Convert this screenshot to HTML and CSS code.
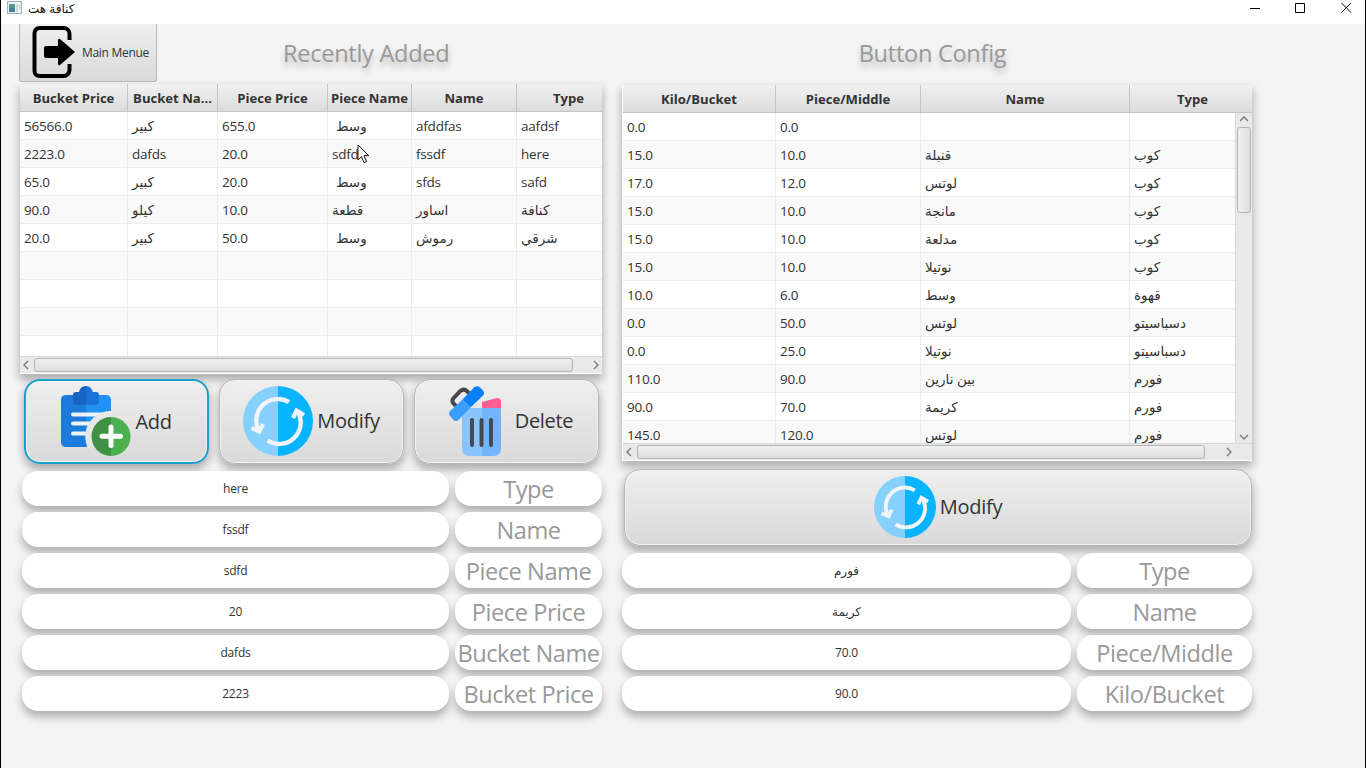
FILE: index.html
```html
<!DOCTYPE html>
<html lang="en">
<head>
<meta charset="utf-8">
<title>كنافة هت</title>
<link rel="stylesheet" href="styles.css">
</head>
<body>
<svg class="defs" width="0" height="0">
  <symbol id="refresh" viewBox="0 0 70 70">
    <path d="M35 0a35 35 0 0 0 0 70z" fill="#86d0fd"/>
    <path d="M35 0a35 35 0 0 1 0 70z" fill="#08b4fd"/>
    <path d="M46 16.200A21.500 21.500 0 0 0 15.500 44" fill="none" stroke="#f1f4f6" stroke-width="4.400"/>
    <path d="M24.500 54.500A21.500 21.500 0 0 0 55.500 27" fill="none" stroke="#f1f4f6" stroke-width="4.400"/>
    <path d="M8.500 42l8 3.500 3.500-7.500M50 32l3.500-7.500 7.500 4.500" fill="none" stroke="#f1f4f6" stroke-width="4.200"/>
  </symbol>
</svg>
<div class="window">
  <header class="titlebar">
    <svg class="appicon" viewBox="0 0 15 13"><rect x=".5" y=".5" width="14" height="12" fill="#eef3f4" stroke="#a5adb0"/><path d="M2 3h6v8H2z" fill="#4f9c8e"/><path d="M2 7h6v4H2z" fill="#43809c"/><path d="M9 3h2v8H9zM12 3h1.500v5H12z" fill="#cbd8df"/></svg>
    <span class="apptitle" dir="rtl">كنافة هت</span>
    <svg class="winbtns" width="102" height="12" viewBox="0 0 102 12" fill="none" stroke="#000"><path d="M0 7.500h10M45.500 2.500h9v9h-9zM91.500 2l9.500 9.500M101 2l-9.500 9.500"/></svg>
  </header>
  <main class="columns">
    <section class="left">
      <div class="top">
        <button class="btn menu">
          <svg width="43" height="52" viewBox="0 0 43 52"><path d="M37.500 14V8a6 6 0 0 0-6-6h-24a5 5 0 0 0-5 5v38a5 5 0 0 0 5 5h24a6 6 0 0 0 6-6v-6" fill="none" stroke="#000" stroke-width="4"/><path d="M14 20h12v-6q0-2 2-1l15 13-15 13q-2 1-2-1v-6H14q-2 0-2-2v-8q0-2 2-2z"/></svg>
          <span>Main Menue</span>
        </button>
        <h1>Recently Added</h1>
      </div>
      <div class="table recent">
        <div class="row head"><b>Bucket Price</b><b>Bucket Na...</b><b>Piece Price</b><b>Piece Name</b><b>Name</b><b class="last">Type</b></div>
        <div class="body">
          <div class="row"><i>56566.0</i><i>كبير</i><i>655.0</i><i class="in">وسط</i><i>afddfas</i><i>aafdsf</i></div>
          <div class="row"><i>2223.0</i><i>dafds</i><i>20.0</i><i>sdfd</i><i>fssdf</i><i>here</i></div>
          <div class="row"><i>65.0</i><i>كبير</i><i>20.0</i><i class="in">وسط</i><i>sfds</i><i>safd</i></div>
          <div class="row"><i>90.0</i><i>كيلو</i><i>10.0</i><i>قطعة</i><i>اساور</i><i>كنافة</i></div>
          <div class="row"><i>20.0</i><i>كبير</i><i>50.0</i><i class="in">وسط</i><i>رموش</i><i>شرقي</i></div>
          <div class="row"><i></i><i></i><i></i><i></i><i></i><i></i></div>
          <div class="row"><i></i><i></i><i></i><i></i><i></i><i></i></div>
          <div class="row"><i></i><i></i><i></i><i></i><i></i><i></i></div>
          <div class="row"><i></i><i></i><i></i><i></i><i></i><i></i></div>
        </div>
        <div class="hscroll"><svg viewBox="0 0 6 10"><path d="M5 1L1 5l4 4"/></svg><span class="thumb"></span><svg viewBox="0 0 6 10"><path d="M1 1l4 4-4 4"/></svg></div>
      </div>
      <div class="actions">
        <button class="btn round focus">
          <svg width="70" height="70" viewBox="0 0 70 70"><path d="M5 9h20v52H5q-5 0-5-5V14q0-5 5-5z" fill="#1b7bdc"/><path d="M25 9h20q5 0 5 5v12L26 46v15h-1z" fill="#2391f3"/><path d="M12 28.500h29M12 37.500h21M12 47.500h17" stroke="#eef2f7" stroke-width="4" stroke-linecap="round"/><path d="M25 0q-6 0-7 6h-3q-3 0-3 3v6q0 4 4 4h9z" fill="#1763c0"/><path d="M25 0q5 0 7 6h3q3 0 3 3v6q0 4-4 4h-9z" fill="#1a71d8"/><path d="M50 25a25.500 25.500 0 0 0-23 37l23-11z" fill="#e8e8e9"/><path d="M50 31a19.500 19.500 0 0 0 0 39z" fill="#3f9143"/><path d="M50 31a19.500 19.500 0 0 1 0 39z" fill="#4caf50"/><path d="M50 41v18.500M41 50.200h18.500" stroke="#fff" stroke-width="5" stroke-linecap="round"/></svg>
          <span>Add</span>
        </button>
        <button class="btn round"><svg width="70" height="70"><use href="#refresh"/></svg><span>Modify</span></button>
        <button class="btn round del">
          <svg width="53" height="70" viewBox="0 0 53 70"><path d="M8 21L3.800 16.500q-1-2 .5-4l7-7.500q3-2.500 6-.5l3 3" fill="none" stroke="#474747" stroke-width="4"/><path d="M33 16l15-4q4 0 4 4v7H33z" fill="#ff5c93"/><path d="M13 22h20v48H21q-8 0-8-8z" fill="#8ac4ff"/><path d="M33 22h19v40q0 8-8 8H33z" fill="#72b5fd"/><path d="M13.500 13.500l8 8L9.500 34q-2.500 2-5 0L1 30q-2-2.500 0-5z" fill="#3a9dff"/><path d="M13.500 13.500L25 1.500q3-2.500 6 0l3 3q2 2.500 0 5L21.500 21.500z" fill="#0a80f8"/><path d="M23 34v25M32.500 34v25M42 34v25" stroke="#484850" stroke-width="4" stroke-linecap="round"/></svg>
          <span>Delete</span>
        </button>
      </div>
      <div class="form">
        <div class="field">here</div><div class="label">Type</div>
        <div class="field">fssdf</div><div class="label">Name</div>
        <div class="field">sdfd</div><div class="label">Piece Name</div>
        <div class="field">20</div><div class="label">Piece Price</div>
        <div class="field">dafds</div><div class="label">Bucket Name</div>
        <div class="field">2223</div><div class="label">Bucket Price</div>
      </div>
    </section>
    <section class="right">
      <div class="top"><h1>Button Config</h1></div>
      <div class="table config">
        <div class="row head"><b>Kilo/Bucket</b><b>Piece/Middle</b><b>Name</b><b class="last">Type</b></div>
        <div class="mid">
          <div class="body">
            <div class="row"><i>0.0</i><i>0.0</i><i></i><i></i></div>
            <div class="row"><i>15.0</i><i>10.0</i><i>قنبلة</i><i>كوب</i></div>
            <div class="row"><i>17.0</i><i>12.0</i><i>لوتس</i><i>كوب</i></div>
            <div class="row"><i>15.0</i><i>10.0</i><i>مانجة</i><i>كوب</i></div>
            <div class="row"><i>15.0</i><i>10.0</i><i>مدلعة</i><i>كوب</i></div>
            <div class="row"><i>15.0</i><i>10.0</i><i>نوتيلا</i><i>كوب</i></div>
            <div class="row"><i>10.0</i><i>6.0</i><i>وسط</i><i>قهوة</i></div>
            <div class="row"><i>0.0</i><i>50.0</i><i>لوتس</i><i>دسباسيتو</i></div>
            <div class="row"><i>0.0</i><i>25.0</i><i>نوتيلا</i><i>دسباسيتو</i></div>
            <div class="row"><i>110.0</i><i>90.0</i><i>بين نارين</i><i>فورم</i></div>
            <div class="row"><i>90.0</i><i>70.0</i><i>كريمة</i><i>فورم</i></div>
            <div class="row"><i>145.0</i><i>120.0</i><i>لوتس</i><i>فورم</i></div>
          </div>
          <div class="vscroll"><svg viewBox="0 0 10 6"><path d="M1 5l4-4 4 4"/></svg><span class="thumb"></span><svg viewBox="0 0 10 6"><path d="M1 1l4 4 4-4"/></svg></div>
        </div>
        <div class="hscroll"><svg viewBox="0 0 6 10"><path d="M5 1L1 5l4 4"/></svg><span class="thumb"></span><svg viewBox="0 0 6 10"><path d="M1 1l4 4-4 4"/></svg></div>
      </div>
      <button class="btn round wide"><svg width="62" height="62"><use href="#refresh"/></svg><span>Modify</span></button>
      <div class="form">
        <div class="field">فورم</div><div class="label">Type</div>
        <div class="field">كريمة</div><div class="label">Name</div>
        <div class="field">70.0</div><div class="label">Piece/Middle</div>
        <div class="field">90.0</div><div class="label">Kilo/Bucket</div>
      </div>
    </section>
  </main>
  <svg class="cursor" width="13" height="20" viewBox="0 0 13 20"><path d="M1 1v15l3.500-3.300 2.500 6 2.600-1.200L7 11.700h4.800z" fill="#fff" stroke="#111"/></svg>
</div>
</body>
</html>
```
FILE: styles.css
```css
* { box-sizing: border-box; }
body { margin: 0; font-family: "Open Sans", "Noto Sans", "DejaVu Sans", sans-serif; color: #333; overflow: hidden; }
.defs { position: absolute; }
.window { position: relative; width: 1366px; height: 768px; background: #f4f4f4; border: solid #000; border-width: 0 1px; overflow: hidden; }
.titlebar { height: 24px; background: #fff; display: flex; align-items: flex-start; padding: 1px 13px 0 6px; }
.appicon { width: 15px; height: 13px; }
.apptitle { font-size: 12px; line-height: 16px; margin-left: 6px; color: #111; }
.winbtns { margin: 0 0 0 auto; }
.columns { display: flex; gap: 20px; padding-left: 19px; }
.left { width: 582px; }
.right { width: 630px; }
.top { height: 60px; display: flex; align-items: flex-start; }
.right .top { height: 61px; justify-content: center; }
h1 { margin: 0; font-size: 23.6px; letter-spacing: -.3px; font-weight: 400; line-height: 58px; color: #999; text-shadow: 0 5px 6px rgba(0,0,0,.24); white-space: nowrap; }
.left h1 { margin-left: 126px; }
.right h1 { margin-right: 9px; }
.btn { font: inherit; color: #333; background: linear-gradient(#efefef, #d9d9d9); border: 1px solid #b4b4b4; display: flex; align-items: center; padding: 0; white-space: nowrap; }
.menu { width: 138px; height: 58px; margin-left: -1px; border-radius: 0 0 3px 3px; border-top: 0; padding: 0 0 1px 12px; gap: 7px; font-size: 12px; letter-spacing: -.3px; }
.round { height: 85px; border-radius: 16px; justify-content: center; gap: 4px; font-size: 20px; letter-spacing: -.3px; padding: 0 0 2px; box-shadow: inset 0 0 0 1px #f3f3f3, 0 5px 8px 1px rgba(0,0,0,.28); }
.round svg, .menu svg { flex: none; }
.focus { border: 2px solid #1a9fce; padding-bottom: 1px; }
.del { gap: 13px; padding-left: 9px; }
.wide { width: 628px; height: 77px; margin: 8px 0 0 2px; }
.table { background: #fff; box-shadow: 0 5px 8px 1px rgba(0,0,0,.28); font-size: 13.5px; letter-spacing: -.22px; }
.recent { height: 290px; }
.config { height: 376px; border-left: 1px solid #fff; }
.row { display: grid; height: 28px; border-bottom: 1px solid #ececec; }
.recent .row { grid-template-columns: 108px 90px 110px 84px 105px 85px; }
.config .row { grid-template-columns: 153px 145px 209px 1fr; }
.row:nth-child(even) { background: #f9f9f9; }
.head { background: linear-gradient(#f1f1f1, #dcdcdc); border-bottom-color: #c4c4c4; }
.head b { text-align: center; font-size: 13.1px; letter-spacing: 0; line-height: 28px; border-right: 1px solid #c4c4c4; white-space: nowrap; }
.head .last { border: 0; }
.recent .last { padding-left: 18px; }
.config .last { padding-left: 3px; }
.row i { font-style: normal; line-height: 28px; padding-left: 4px; border-right: 1px solid #ececec; white-space: nowrap; overflow: hidden; }
.row i:last-child { border: 0; }
.row .in { padding-left: 8px; }
.body { overflow: hidden; flex: 1; }
.recent .body { height: 244px; }
.mid { display: flex; height: 330px; }
.hscroll { height: 17px; background: #e9e9e9; border-top: 1px solid #d8d8d8; display: flex; align-items: center; padding: 0 3px; }
.hscroll svg { width: 6px; height: 10px; }
.hscroll svg:last-child { margin-left: auto; }
.config .hscroll svg:last-child { margin-right: 17px; }
.table svg { fill: none; stroke: #777; stroke-width: 1.3; }
.thumb { border: 1px solid #b4b4b4; border-radius: 3px; background: linear-gradient(#f1f1f1, #dddddd); }
.hscroll .thumb { height: 14px; margin-left: 5px; width: 539px; }
.config .hscroll .thumb { width: 568px; }
.vscroll { width: 17px; background: #e9e9e9; border-left: 1px solid #d8d8d8; display: flex; flex-direction: column; align-items: center; padding: 3px 0; }
.vscroll svg { width: 10px; height: 6px; }
.vscroll svg:last-child { margin-top: auto; }
.vscroll .thumb { width: 14px; height: 86px; margin-top: 5px; background: linear-gradient(90deg, #f1f1f1, #dddddd); }
.actions { display: flex; gap: 10px; margin: 5px 3px 0 4px; }
.actions .btn { flex: 0 0 185px; }
.form { display: grid; grid-template-columns: 427px 147px; gap: 6px; margin: 7px 0 0 2px; }
.right .form { grid-template-columns: 449px 175px; margin: 7px 0 0; }
.field, .label { height: 35px; line-height: 36px; border-radius: 16px; background: #fff; text-align: center; box-shadow: 0 6px 8px rgba(0,0,0,.28); white-space: nowrap; }
.field { font-size: 12px; letter-spacing: -.2px; }
.label { font-size: 23.6px; letter-spacing: -.45px; color: #999; }
.cursor { position: absolute; left: 356px; top: 144px; }
```
